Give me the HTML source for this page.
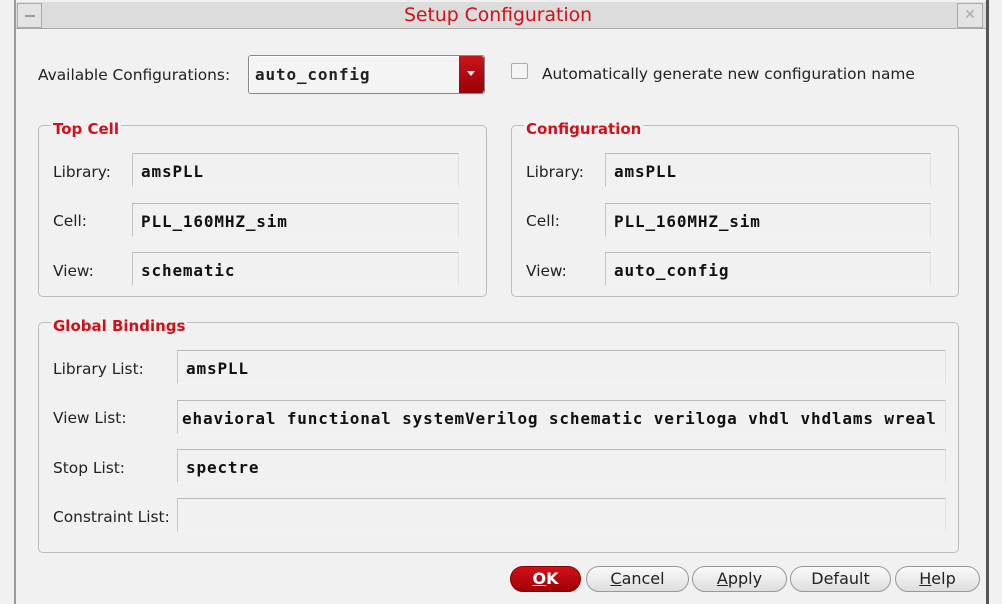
<!DOCTYPE html>
<html><head><style>
*{margin:0;padding:0;box-sizing:border-box}
body{width:1002px;height:604px;background:#f1f1f1;position:relative;overflow:hidden;font-family:"DejaVu Sans","Liberation Sans",sans-serif;font-size:15.4px;color:#222}
.a{position:absolute}
.lbl{position:absolute;line-height:18px}
.fld{position:absolute;border-top:1px solid #b9b9b9;border-left:1px solid #c4c4c4;border-right:1px solid #e2e2e2;border-bottom:1px solid #f4f4f4;background:#f1f1f1;font-family:"DejaVu Sans Mono","Liberation Mono",monospace;font-weight:bold;font-size:16px;letter-spacing:0.85px;padding:8px 0 0 8px;white-space:nowrap;overflow:hidden;color:#111}
.grp{position:absolute;border:1px solid #bdbdbd;border-radius:5px}
.gt{position:absolute;color:#d0101a;font-weight:bold;background:#f1f1f1;padding:0 2px;font-size:15px;line-height:18px}
.btn{position:absolute;top:566px;height:26px;border:1px solid #999;border-radius:13px;background:linear-gradient(#fafafa,#dedede);text-align:center;line-height:24px;font-size:16px;color:#222}
u{text-decoration:underline}
</style></head><body>
<div class="a" style="left:14px;top:0;width:2px;height:604px;background:#9a9a9a"></div>
<div class="a" style="left:986px;top:0;width:3px;height:604px;background:#555"></div>
<div class="a" style="left:16px;top:2px;width:970px;height:27px;background:#dcdcdc;border-bottom:1px solid #aaa"></div>
<div class="a" style="left:17px;top:3px;width:25px;height:25px;border:1px solid #aaa;background:#e3e3e3"></div>
<div class="a" style="left:25px;top:15px;width:10px;height:2px;background:#999"></div>
<div class="a" style="left:957px;top:3px;width:26px;height:25px;border:1px solid #aaa;background:#e3e3e3;color:#aaa;text-align:center;font-size:14px;line-height:23px">✕</div>
<div class="a" style="left:0;top:4px;width:1002px;text-align:center;color:#d0101a;font-size:18.8px;line-height:24px;padding-right:6px">Setup Configuration</div>

<div class="lbl" style="left:38px;top:66px">Available Configurations:</div>
<div class="a" style="left:248px;top:55px;width:237px;height:39px;border:1px solid #888;border-radius:3px;background:#f4f4f4;box-shadow:inset 1px 1px 0 #fff"></div>
<div class="a" style="left:255px;top:66px;font-family:'DejaVu Sans Mono','Liberation Mono',monospace;font-weight:bold;font-size:16px;letter-spacing:0.85px;line-height:18px">auto_config</div>
<div class="a" style="left:459px;top:56px;width:25px;height:37px;background:linear-gradient(#c8141c,#9a0008);border-radius:0 3px 3px 0"></div>
<div class="a" style="left:467px;top:71px;width:0;height:0;border-left:4px solid transparent;border-right:4px solid transparent;border-top:5px solid #fff"></div>
<div class="a" style="left:511px;top:63px;width:17px;height:16px;border:1px solid #aaa;border-radius:2px;background:#f4f4f4"></div>
<div class="lbl" style="left:542px;top:65px">Automatically generate new configuration name</div>

<div class="grp" style="left:38px;top:125px;width:449px;height:172px"></div>
<div class="gt" style="left:51px;top:120px">Top Cell</div>
<div class="lbl" style="left:53px;top:163px">Library:</div>
<div class="lbl" style="left:53px;top:212px">Cell:</div>
<div class="lbl" style="left:53px;top:262px">View:</div>
<div class="fld" style="left:132px;top:153px;width:327px;height:34px">amsPLL</div>
<div class="fld" style="left:132px;top:203px;width:327px;height:34px">PLL_160MHZ_sim</div>
<div class="fld" style="left:132px;top:252px;width:327px;height:34px">schematic</div>

<div class="grp" style="left:511px;top:125px;width:448px;height:172px"></div>
<div class="gt" style="left:524px;top:120px">Configuration</div>
<div class="lbl" style="left:526px;top:163px">Library:</div>
<div class="lbl" style="left:526px;top:212px">Cell:</div>
<div class="lbl" style="left:526px;top:262px">View:</div>
<div class="fld" style="left:605px;top:153px;width:326px;height:34px">amsPLL</div>
<div class="fld" style="left:605px;top:203px;width:326px;height:34px">PLL_160MHZ_sim</div>
<div class="fld" style="left:605px;top:252px;width:326px;height:34px">auto_config</div>

<div class="grp" style="left:38px;top:322px;width:921px;height:231px"></div>
<div class="gt" style="left:51px;top:317px">Global Bindings</div>
<div class="lbl" style="left:53px;top:360px">Library List:</div>
<div class="lbl" style="left:53px;top:409px">View List:</div>
<div class="lbl" style="left:53px;top:459px">Stop List:</div>
<div class="lbl" style="left:53px;top:508px">Constraint List:</div>
<div class="fld" style="left:177px;top:350px;width:769px;height:34px">amsPLL</div>
<div class="fld" style="left:177px;top:400px;width:769px;height:34px;padding-left:4px">ehavioral functional systemVerilog schematic veriloga vhdl vhdlams wreal</div>
<div class="fld" style="left:177px;top:449px;width:769px;height:34px">spectre</div>
<div class="fld" style="left:177px;top:498px;width:769px;height:34px"></div>

<div class="btn" style="left:510px;width:71px;background:linear-gradient(#d01018,#a00008);border-color:#800;color:#fff;font-weight:bold"><u>O</u>K</div>
<div class="btn" style="left:586px;width:103px"><u>C</u>ancel</div>
<div class="btn" style="left:692px;width:95px"><u>A</u>pply</div>
<div class="btn" style="left:790px;width:101px">Default</div>
<div class="btn" style="left:895px;width:85px"><u>H</u>elp</div>
</body></html>
